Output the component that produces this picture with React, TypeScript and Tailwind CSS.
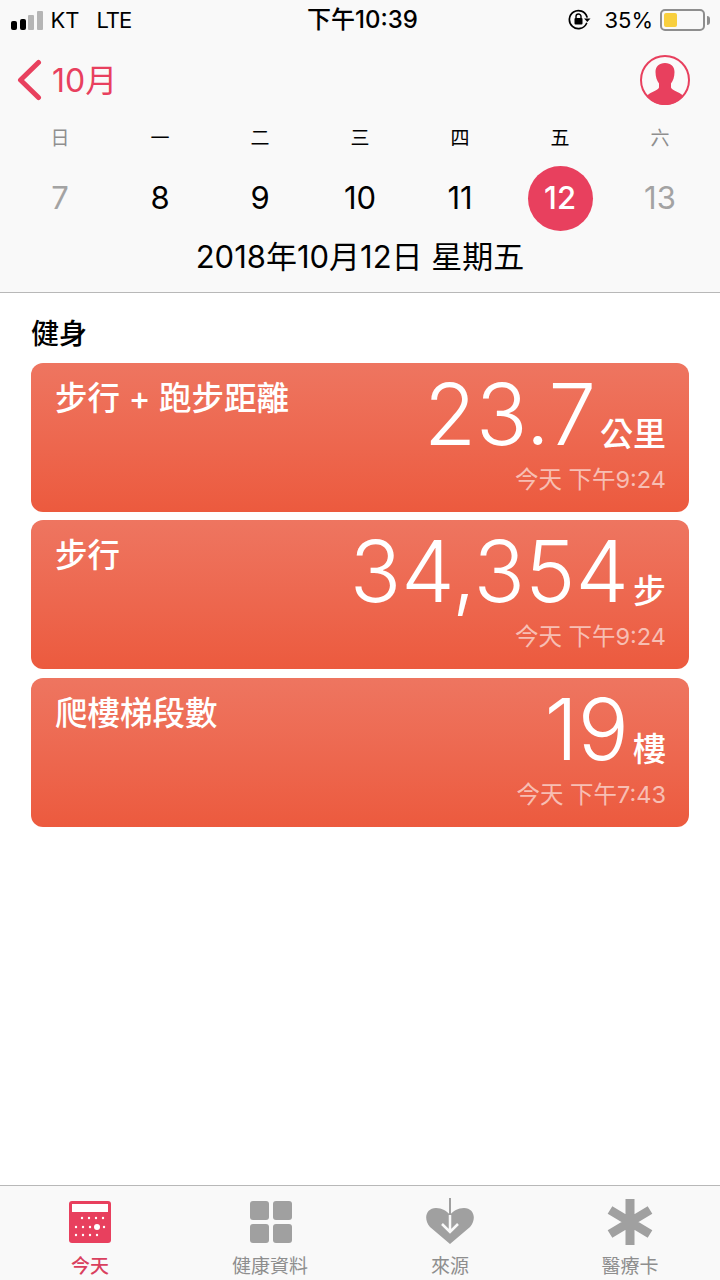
const days = [
    { label: '日', date: '7', muted: true },
    { label: '一', date: '8' },
    { label: '二', date: '9' },
    { label: '三', date: '10' },
    { label: '四', date: '11' },
    { label: '五', date: '12', today: true },
    { label: '六', date: '13', muted: true },
];

const cards = [
    { title: '步行 + 跑步距離', value: '23.7', unit: '公里', time: '今天 下午9:24' },
    { title: '步行', value: '34,354', unit: '步', time: '今天 下午9:24' },
    { title: '爬樓梯段數', value: '19', unit: '樓', time: '今天 下午7:43' },
];

function StatusBar() {
    return (
        <div className="flex h-[40px] items-center justify-between pl-[11px] pr-[10px] text-[22px] leading-none text-black">
            <div className="flex w-[200px] items-center">
                <div className="flex items-end gap-[2.500px]">
                    <span className="h-[9px] w-[6px] rounded-[2px] bg-black" />
                    <span className="h-[11px] w-[6px] rounded-[2px] bg-black" />
                    <span className="h-[15px] w-[6px] rounded-[1px] bg-[#b5b5b5]" />
                    <span className="h-[19px] w-[6px] rounded-[1px] bg-[#b5b5b5]" />
                </div>
                <span className="ml-[8px]">KT</span>
                <span className="ml-[17px] tracking-[-1px]">LTE</span>
            </div>
            <div className="translate-x-[2px] text-[24px] font-medium">下午10:39</div>
            <div className="flex w-[200px] items-center justify-end">
                <svg width="23" height="22" viewBox="0 0 23 22" fill="none" className="mr-[13px]">
                    <path d="M18.500 14.500A9 9 0 1 1 19 8" stroke="black" strokeWidth="1.700" strokeLinecap="round" />
                    <path d="M16 9.500h6.500l-3.200 3.600z" fill="black" />
                    <rect x="6.500" y="9" width="8" height="6.500" rx="1" fill="black" />
                    <path d="M8 9V7.500a2.500 2.500 0 0 1 5 0V9" stroke="black" strokeWidth="1.400" />
                </svg>
                <span>35%</span>
                <div className="ml-[7px] flex h-[22px] w-[45px] items-center rounded-[5px] border-2 border-[#8e8e8e] p-[2px]">
                    <div className="h-full w-[13px] rounded-[2px] bg-[#f8cf3e]" />
                </div>
                <span className="ml-[2px] h-[9px] w-[3px] rounded-r-[3px] bg-[#8e8e8e]" />
            </div>
        </div>
    );
}

function CalendarHeader() {
    return (
        <div className="h-[253px] border-b border-[#b8b8b8] bg-[#f9f9f9]">
            <div className="flex h-[80px] items-center justify-between pl-[17px] pr-[30px]">
                <div className="flex items-center text-[#e8405e]">
                    <svg width="26" height="44" viewBox="0 0 26 44" fill="none">
                        <path d="M21.500 4.500 3.500 22l18 17.500" stroke="currentColor" strokeWidth="5" strokeLinecap="round" strokeLinejoin="round" />
                    </svg>
                    <span className="ml-[9px] translate-y-[1px] text-[32px] leading-none">10月</span>
                </div>
                <svg width="50" height="50" viewBox="0 0 50 50" fill="none">
                    <circle cx="25" cy="25" r="24" stroke="#e8405e" strokeWidth="2" fill="#fafafa" />
                    <path d="M25 8c6 0 9.500 3.500 9.500 9 0 5-1.500 9-3.500 11.500v4c1 2.500 6 4 10 6.500 1 .6 1.500 1.500 1.500 2.500a22 22 0 0 1-35 0c0-1 .5-1.900 1.500-2.500 4-2.500 9-4 10-6.500v-4C17 26 15.500 22 15.500 17c0-5.500 3.500-9 9.500-9z" fill="#e8405e" />
                </svg>
            </div>
            <div className="grid grid-cols-7 px-[10px]">
                {days.map((day) => (
                    <div key={day.label} className="flex flex-col items-center">
                        <div className={`flex h-[36px] items-center text-[19px] leading-none ${day.muted ? 'text-[#8f8f8f]' : 'text-black'}`}>{day.label}</div>
                        <div
                            className={`mt-[10px] flex h-[65px] w-[65px] items-center justify-center rounded-full pb-[3px] text-[31px] leading-none ${
                                day.today ? 'bg-[#e8405e] font-medium text-white' : day.muted ? 'text-[#a3a3a3]' : 'text-black'
                            }`}
                        >
                            {day.date}
                        </div>
                    </div>
                ))}
            </div>
            <div className="mt-[6px] text-center text-[31px] leading-[40px] text-black">2018年10月12日 星期五</div>
        </div>
    );
}

function MetricCard({ title, value, unit, time }: { title: string; value: string; unit: string; time: string }) {
    return (
        <div className="flex h-[149px] justify-between rounded-[12px] bg-gradient-to-b from-[#ee7560] to-[#ec5a3e] pl-[24px] pr-[23px] text-white last:mt-[1px]">
            <div className="mt-[17px] text-[32.500px] font-medium leading-[38px]">{title}</div>
            <div className="flex flex-col items-end">
                <div className="flex items-baseline">
                    <span className="text-[85px] font-light leading-[104px]">{value}</span>
                    <span className="ml-[4px] translate-y-[1px] text-[33px] font-medium leading-none">{unit}</span>
                </div>
                <div className="mt-[-2px] text-[23.500px] leading-[30px] text-white/60">{time}</div>
            </div>
        </div>
    );
}

function TabItem({ label, active, children }: { label: string; active?: boolean; children: React.ReactNode }) {
    return (
        <div className="flex flex-col items-center">
            <div className="flex h-[60px] items-center justify-center">{children}</div>
            <div className={`mt-[2px] text-[19px] leading-[26px] ${active ? 'font-medium text-[#d9405e]' : 'text-[#8e8e8e]'}`}>{label}</div>
        </div>
    );
}

function TabBar() {
    return (
        <div className="grid h-[95px] grid-cols-4 border-t border-[#b8b8b8] bg-[#f9f9f9] pt-[6px]">
            <TabItem label="今天" active>
                <svg width="44" height="44" viewBox="0 0 44 44">
                    <rect x="1" y="1" width="42" height="42" rx="3" fill="#e8405e" />
                    <rect x="4" y="4" width="36" height="8" fill="white" />
                    {[14, 21, 28, 35].map((x) => <circle key={x} cx={x} cy="18" r="1.200" fill="white" />)}
                    {[8, 15, 22, 36].map((x) => <circle key={x} cx={x} cy="27" r="1.200" fill="white" />)}
                    <circle cx="29" cy="27" r="3" fill="white" />
                    {[8, 15, 22, 29].map((x) => <circle key={x} cx={x} cy="35" r="1.200" fill="white" />)}
                </svg>
            </TabItem>
            <TabItem label="健康資料">
                <div className="grid translate-x-[1px] grid-cols-2 gap-[4px]">
                    <span className="h-[19px] w-[19px] rounded-[3px] bg-[#a0a0a0]" />
                    <span className="h-[19px] w-[19px] rounded-[3px] bg-[#a0a0a0]" />
                    <span className="h-[19px] w-[19px] rounded-[3px] bg-[#a0a0a0]" />
                    <span className="h-[19px] w-[19px] rounded-[3px] bg-[#a0a0a0]" />
                </div>
            </TabItem>
            <TabItem label="來源">
                <svg width="50" height="50" viewBox="0 0 50 50" fill="none">
                    <path d="M25 47 5 30C-2 22 1 11 11 11c6 0 11 3 14 7 3-4 8-7 14-7 10 0 13 11 6 19z" fill="#a0a0a0" />
                    <path d="M25 1v20" stroke="#a0a0a0" strokeWidth="2" />
                    <path d="M25 18v17M17 27l8 8 8-8" stroke="#f9f9f9" strokeWidth="2.500" />
                </svg>
            </TabItem>
            <TabItem label="醫療卡">
                <svg width="48" height="50" viewBox="0 0 48 50" fill="none">
                    <path d="M24 2v46M4 13l40 24M44 13 4 37" stroke="#a0a0a0" strokeWidth="9" strokeLinejoin="round" />
                </svg>
            </TabItem>
        </div>
    );
}

export default function App() {
    return (
        <div className="flex h-[1280px] w-[720px] flex-col overflow-hidden bg-white font-['Inter','Noto_Sans_CJK_TC',sans-serif]">
            <div className="bg-[#f9f9f9]">
                <StatusBar />
                <CalendarHeader />
            </div>
            <main className="flex-1 px-[31px]">
                <h2 className="mt-[22px] text-[28px] font-medium leading-[38px] text-black">健身</h2>
                <div className="mt-[10px] flex flex-col gap-[8px]">
                    {cards.map((card) => (
                        <MetricCard key={card.title} {...card} />
                    ))}
                </div>
            </main>
            <TabBar />
        </div>
    );
}
